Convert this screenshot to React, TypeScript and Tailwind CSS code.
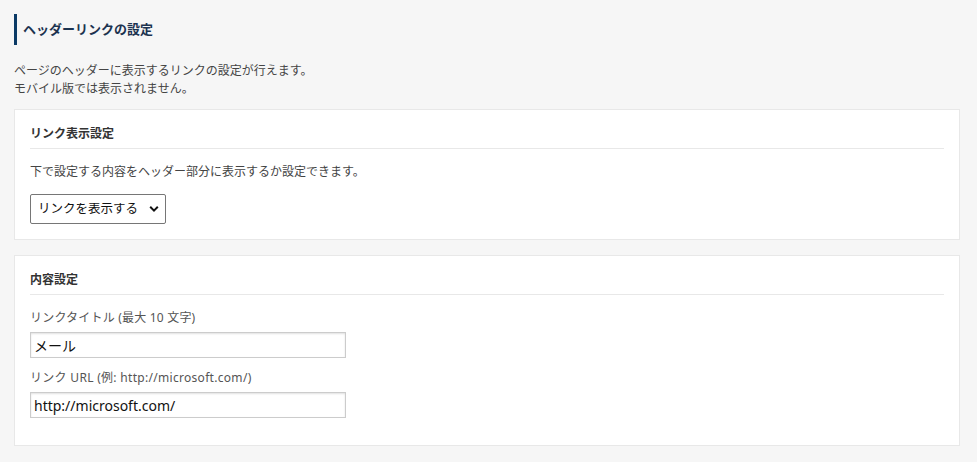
import React from "react";

const font = { fontFamily: '"Noto Sans", "Noto Sans CJK JP", sans-serif' };

export default function App() {
  return (
    <div className="min-h-screen bg-[#f6f6f6] pl-[14px] pr-[17px] pt-[14px] pb-[16px] text-[#333]" style={font}>
      <div className="flex h-[31px] items-center border-l-[3px] border-[#0b3a66] pl-[6px]">
        <h1 className="text-[13px] font-bold leading-none text-[#1c3350]">ヘッダーリンクの設定</h1>
      </div>
      <p className="mt-[17px] text-[12px] leading-[18px] text-[#444]">
        ページのヘッダーに表示するリンクの設定が行えます。
        <br />
        モバイル版では表示されません。
      </p>

      <section className="mt-[11px] border border-[#e8e8e8] bg-white px-[15px] pt-[15px] pb-[15px]">
        <h2 className="border-b border-[#e8e8e8] pb-[5px] text-[12px] font-bold leading-[18px] text-[#333]">リンク表示設定</h2>
        <p className="mt-[14px] text-[12px] leading-[18px] text-[#444]">下で設定する内容をヘッダー部分に表示するか設定できます。</p>
        <div className="relative mt-[13px] w-[136px]">
          <select
            className="h-[30px] w-full appearance-none rounded-[2px] border border-[#767676] bg-white pl-[7px] pr-[24px] text-[12.5px] leading-none text-[#111]"
            defaultValue="show"
          >
            <option value="show">リンクを表示する</option>
            <option value="hide">リンクを表示しない</option>
          </select>
          <svg className="pointer-events-none absolute right-[7px] top-[11px]" width="10" height="8" viewBox="0 0 10 8">
            <path d="M1.2 1.8 L5 5.6 L8.8 1.8" fill="none" stroke="#111" strokeWidth="2" />
          </svg>
        </div>
      </section>

      <section className="mt-[15px] border border-[#e8e8e8] bg-white px-[15px] pt-[15px] pb-[27px]">
        <h2 className="border-b border-[#e8e8e8] pb-[5px] text-[12px] font-bold leading-[18px] text-[#333]">内容設定</h2>
        <label className="mt-[14px] block text-[12px] leading-[18px] tracking-[0.2px] text-[#555]">リンクタイトル (最大 10 文字)</label>
        <input
          className="mt-[5px] block h-[26px] w-[316px] border border-[#cccccc] bg-white px-[3px] text-[14px] text-[#111] shadow-[inset_0_1px_2px_rgba(0,0,0,0.12)] outline-none"
          defaultValue="メール"
        />
        <label className="mt-[11px] block text-[12px] leading-[18px] tracking-[0.3px] text-[#555]">リンク URL (例: http://microsoft.com/)</label>
        <input
          className="mt-[5px] block h-[26px] w-[316px] border border-[#cccccc] bg-white px-[3px] text-[14px] text-[#111] shadow-[inset_0_1px_2px_rgba(0,0,0,0.12)] outline-none"
          defaultValue="http://microsoft.com/"
        />
      </section>
    </div>
  );
}
